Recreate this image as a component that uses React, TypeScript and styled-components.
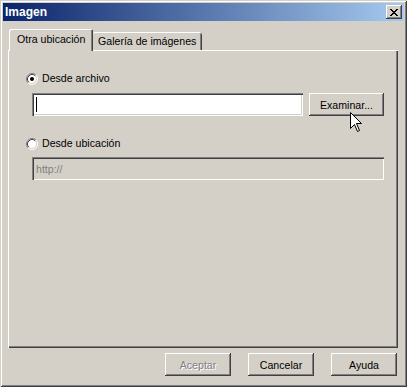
import React from 'react';
import styled, { createGlobalStyle } from 'styled-components';

const Global = createGlobalStyle`
  html, body { margin: 0; padding: 0; background: #D4D0C8; }
  body { font-family: "Liberation Sans", Arial, sans-serif; font-size: 10.6px; color: #000; }
`;

const Window = styled.div`
  box-sizing: border-box;
  position: relative;
  width: 407px;
  height: 387px;
  padding: 3px;
  background: #D4D0C8;
  box-shadow: inset 1px 1px #D4D0C8, inset -1px -1px #404040, inset 2px 2px #FFFFFF, inset -2px -2px #808080;
  display: flex;
  flex-direction: column;
`;

const TitleBar = styled.div`
  height: 18px;
  flex: none;
  background: linear-gradient(to right, #0A246A, #A6CAF0);
  display: flex;
  align-items: center;
  justify-content: space-between;
  padding: 0 2px;
`;

const Title = styled.span`
  color: #fff;
  font-weight: bold;
  font-size: 12px;
  line-height: 18px;
`;

const CloseButton = styled.div`
  width: 16px;
  height: 14px;
  background: #D4D0C8;
  box-shadow: inset -1px -1px #404040, inset 1px 1px #FFFFFF, inset -2px -2px #808080;
  display: flex;
  align-items: center;
  justify-content: center;
`;

const Body = styled.div`
  flex: 1;
  display: flex;
  flex-direction: column;
  padding: 8px 6px 8px 5px;
`;

const TabStrip = styled.div`
  display: flex;
  align-items: flex-end;
  height: 21px;
  padding-left: 1px;
`;

const Tab = styled.div<{ $active?: boolean }>`
  box-sizing: border-box;
  position: relative;
  z-index: ${p => (p.$active ? 2 : 1)};
  height: ${p => (p.$active ? 22 : 18)}px;
  margin-bottom: ${p => (p.$active ? -1 : 0)}px;
  width: ${p => (p.$active ? 84 : 109)}px;
  padding-left: ${p => (p.$active ? 8 : 5)}px;
  padding-bottom: ${p => (p.$active ? 2 : 0)}px;
  display: flex;
  align-items: center;
  background: #D4D0C8;
  border-radius: 2px 2px 0 0;
  box-shadow: ${p =>
    p.$active
      ? 'inset 1px 1px #FFFFFF, inset -1px 0 #404040, inset -2px 0 #808080'
      : 'inset 0 1px #FFFFFF, inset -1px 0 #404040, inset -2px 0 #808080'};
  white-space: nowrap;
`;

const Panel = styled.div`
  box-sizing: border-box;
  height: 298px;
  width: 390px;
  padding: 22px 0 0 18px;
  box-shadow: inset 1px 1px #FFFFFF, inset -1px -1px #404040, inset -2px -2px #808080;
  display: flex;
  flex-direction: column;
`;

const RadioRow = styled.label<{ $gap?: number }>`
  display: flex;
  align-items: center;
  gap: 4px;
  height: 13px;
  margin-top: ${p => p.$gap ?? 0}px;
  line-height: 13px;
`;

const FieldRow = styled.div<{ $gap: number }>`
  display: flex;
  gap: 6px;
  margin: ${p => p.$gap}px 0 0 6px;
`;

const TextBox = styled.div<{ $width: number; $disabled?: boolean }>`
  box-sizing: border-box;
  width: ${p => p.$width}px;
  height: 23px;
  padding: 0 4px;
  display: flex;
  align-items: center;
  background: ${p => (p.$disabled ? '#D4D0C8' : '#FFFFFF')};
  color: #808080;
  box-shadow: inset 1px 1px #808080, inset 2px 2px #404040, inset -1px -1px #FFFFFF, inset -2px -2px #D4D0C8;
`;

const Caret = styled.span`
  display: block;
  width: 1px;
  height: 15px;
  background: #000;
`;

const Button = styled.div<{ $width: number; $disabled?: boolean }>`
  box-sizing: border-box;
  width: ${p => p.$width}px;
  height: 23px;
  display: flex;
  align-items: center;
  justify-content: center;
  background: #D4D0C8;
  color: ${p => (p.$disabled ? '#808080' : '#000')};
  text-shadow: ${p => (p.$disabled ? '1px 1px #FFFFFF' : 'none')};
  box-shadow: inset -1px -1px #404040, inset 1px 1px #FFFFFF, inset -2px -2px #808080;
`;

const ButtonBar = styled.div`
  display: flex;
  justify-content: flex-end;
  gap: 17px;
  margin-top: 5px;
  padding-right: 1px;
`;

const Cursor = styled.svg`
  position: absolute;
  left: 350px;
  top: 112px;
`;

const CloseGlyph = () => {
  const rows = ['xx....xx', '.xx..xx.', '..xxxx..', '...xx...', '..xxxx..', '.xx..xx.', 'xx....xx'];
  return (
    <svg width="8" height="7" viewBox="0 0 8 7" shapeRendering="crispEdges">
      {rows.flatMap((r, y) =>
        r.split('').map((c, x) => (c === 'x' ? <rect key={`${x}-${y}`} x={x} y={y} width="1" height="1" fill="#000" /> : null))
      )}
    </svg>
  );
};

const Radio = ({ checked }: { checked?: boolean }) => (
  <svg width="12" height="12" viewBox="0 0 12 12">
    <circle cx="6" cy="6" r="5" fill="#fff" />
    <path d="M2.11 9.89 A5.5 5.5 0 0 1 9.89 2.11" fill="none" stroke="#808080" strokeWidth="1" />
    <path d="M9.89 2.11 A5.5 5.5 0 0 1 2.11 9.89" fill="none" stroke="#FFFFFF" strokeWidth="1" />
    <path d="M2.82 9.18 A4.5 4.5 0 0 1 9.18 2.82" fill="none" stroke="#404040" strokeWidth="1" />
    <path d="M9.18 2.82 A4.5 4.5 0 0 1 2.82 9.18" fill="none" stroke="#D4D0C8" strokeWidth="1" />
    {checked && <circle cx="6" cy="6" r="2" fill="#000" />}
  </svg>
);

export default function App() {
  return (
    <>
      <Global />
      <Window>
        <TitleBar>
          <Title>Imagen</Title>
          <CloseButton>
            <CloseGlyph />
          </CloseButton>
        </TitleBar>
        <Body>
          <TabStrip>
            <Tab $active>Otra ubicación</Tab>
            <Tab>Galería de imágenes</Tab>
          </TabStrip>
          <Panel>
            <RadioRow>
              <Radio checked />
              <span>Desde archivo</span>
            </RadioRow>
            <FieldRow $gap={8}>
              <TextBox $width={271}>
                <Caret />
              </TextBox>
              <Button $width={75}>Examinar...</Button>
            </FieldRow>
            <RadioRow $gap={21}>
              <Radio />
              <span>Desde ubicación</span>
            </RadioRow>
            <FieldRow $gap={7}>
              <TextBox $width={352} $disabled>
                http://
              </TextBox>
            </FieldRow>
          </Panel>
          <ButtonBar>
            <Button $width={66} $disabled>
              Aceptar
            </Button>
            <Button $width={66}>Cancelar</Button>
            <Button $width={66}>Ayuda</Button>
          </ButtonBar>
        </Body>
        <Cursor width="13" height="21" viewBox="0 0 13 21">
          <path
            d="M0.5 0.5 L0.5 16.5 L4.5 12.5 L7.5 19.5 L9.5 18.5 L6.5 11.5 L11.5 11.5 Z"
            fill="#fff"
            stroke="#000"
            strokeWidth="1"
            strokeLinejoin="miter"
          />
        </Cursor>
      </Window>
    </>
  );
}
